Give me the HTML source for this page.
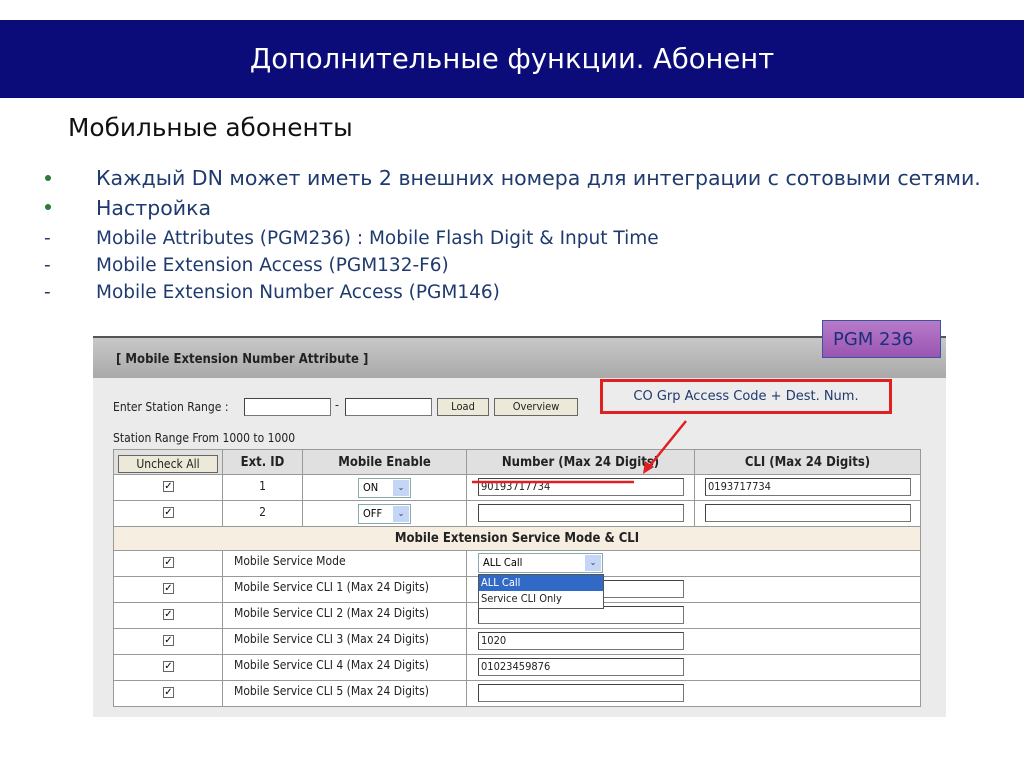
<!DOCTYPE html>
<html><head><meta charset="utf-8"><style>
*{margin:0;padding:0;box-sizing:border-box}
body{width:1024px;height:767px;background:#fff;position:relative;overflow:hidden;font-family:"DejaVu Sans","Liberation Sans",sans-serif}
.a{position:absolute}
.hdr{left:0;top:20px;width:1024px;height:78px;background:#0b0b7a;color:#fff;font-size:27.4px;text-align:center;line-height:80px}
.t{color:#1f3a6e;font-size:20.5px;white-space:nowrap}
.d{font-size:18.5px}
.s{font-size:12px;color:#222;font-family:"DejaVu Sans Condensed","Liberation Sans",sans-serif}
.cell{position:absolute;border-right:1px solid #999;border-bottom:1px solid #999;background:#fff}
.th{background:#e0e0e0;font-weight:bold;font-size:13px;text-align:center;line-height:25px;color:#222;font-family:"DejaVu Sans Condensed",sans-serif}
.inp{position:absolute;background:#fff;border:1px solid #777;border-top-color:#444;border-left-color:#444;height:18px;font-size:11px;line-height:16px;padding-left:2px;font-family:"DejaVu Sans Condensed",sans-serif;color:#222}
.cb{position:absolute;width:11px;height:11px;border:1px solid #666;background:#fff;font-size:10px;line-height:9px;text-align:center;color:#000}
.btn{position:absolute;background:#ece9d8;border:1px solid #666;font-size:11px;text-align:center;line-height:16px;height:18px;color:#222;font-family:"DejaVu Sans Condensed",sans-serif}
.sel{position:absolute;background:#fff;border:1px solid #8aa;height:20px;font-size:11px;line-height:18px;padding-left:4px;font-family:"DejaVu Sans Condensed",sans-serif}
.sel i{position:absolute;right:1px;top:1px;width:16px;height:16px;background:#c5d5f5;font-style:normal;font-size:9px;color:#335;text-align:center;line-height:16px}
.dot{position:absolute;width:6px;height:6px;border-radius:50%;background:#2a7a3a}
</style></head><body>
<div class="a hdr">Дополнительные функции. Абонент</div>
<div class="a" style="left:68px;top:113px;font-size:24.8px;color:#111">Мобильные абоненты</div>
<div class="dot" style="left:45px;top:175px"></div>
<div class="dot" style="left:45px;top:204px"></div>
<div class="a t" style="left:96px;top:166px">Каждый DN может иметь 2 внешних номера для интеграции с сотовыми сетями.</div>
<div class="a t" style="left:96px;top:196px">Настройка</div>
<div class="a t d" style="left:44px;top:228px">-</div>
<div class="a t d" style="left:44px;top:255px">-</div>
<div class="a t d" style="left:44px;top:282px">-</div>
<div class="a t d" style="left:96px;top:228px">Mobile Attributes (PGM236) : Mobile Flash Digit &amp; Input Time</div>
<div class="a t d" style="left:96px;top:255px">Mobile Extension Access (PGM132-F6)</div>
<div class="a t d" style="left:96px;top:282px">Mobile Extension Number Access (PGM146)</div>

<div class="a" style="left:93px;top:336px;width:853px;height:381px;background:#ebebeb"></div>
<div class="a" style="left:93px;top:336px;width:853px;height:42px;background:linear-gradient(#c8c8c8,#a9a9a9);border-top:2px solid #555"></div>
<div class="a s" style="left:116px;top:352px;font-weight:bold;font-size:13px">[ Mobile Extension Number Attribute ]</div>
<div class="a" style="left:822px;top:320px;width:119px;height:38px;background:linear-gradient(#b77bc8,#9a55b2);border:1px solid #3955a0;color:#1b2f7a;font-size:18px;padding:8px 0 0 10px">PGM 236</div>

<div class="a s" style="left:113px;top:400px">Enter Station Range :</div>
<div class="inp" style="left:244px;top:398px;width:87px"></div>
<div class="a s" style="left:335px;top:398px">-</div>
<div class="inp" style="left:345px;top:398px;width:87px"></div>
<div class="btn" style="left:437px;top:398px;width:52px">Load</div>
<div class="btn" style="left:494px;top:398px;width:84px">Overview</div>
<div class="a s" style="left:113px;top:431px">Station Range From 1000 to 1000</div>

<div class="a" style="left:600px;top:379px;width:292px;height:35px;border:3px solid #e02020;background:#ececec;color:#1f3a6e;font-size:13px;text-align:center;line-height:29px">CO Grp Access Code + Dest. Num.</div>

<div class="a" style="left:113px;top:449px;width:808px;height:258px;border-left:1px solid #999;border-top:1px solid #999;background:#fff"></div>
<div class="cell th" style="left:114px;top:450px;width:109px;height:25px"></div>
<div class="btn" style="left:118px;top:455px;width:100px;height:18px;font-size:12px">Uncheck All</div>
<div class="cell th" style="left:223px;top:450px;width:80px;height:25px">Ext. ID</div>
<div class="cell th" style="left:303px;top:450px;width:164px;height:25px">Mobile Enable</div>
<div class="cell th" style="left:467px;top:450px;width:228px;height:25px">Number (Max 24 Digits)</div>
<div class="cell th" style="left:695px;top:450px;width:226px;height:25px">CLI (Max 24 Digits)</div>
<div class="cell" style="left:114px;top:475px;width:109px;height:26px"></div>
<div class="cell s" style="left:223px;top:475px;width:80px;height:26px;text-align:center;padding-top:4px">1</div>
<div class="cell" style="left:303px;top:475px;width:164px;height:26px"></div>
<div class="cell" style="left:467px;top:475px;width:228px;height:26px"></div>
<div class="cell" style="left:695px;top:475px;width:226px;height:26px"></div>
<div class="cell" style="left:114px;top:501px;width:109px;height:26px"></div>
<div class="cell s" style="left:223px;top:501px;width:80px;height:26px;text-align:center;padding-top:4px">2</div>
<div class="cell" style="left:303px;top:501px;width:164px;height:26px"></div>
<div class="cell" style="left:467px;top:501px;width:228px;height:26px"></div>
<div class="cell" style="left:695px;top:501px;width:226px;height:26px"></div>
<div class="cb" style="left:163px;top:481px">✓</div>
<div class="cb" style="left:163px;top:507px">✓</div>
<div class="sel" style="left:358px;top:478px;width:53px">ON<i>⌄</i></div>
<div class="sel" style="left:358px;top:504px;width:53px">OFF<i>⌄</i></div>
<div class="inp" style="left:478px;top:478px;width:206px">90193717734</div>
<div class="inp" style="left:705px;top:478px;width:206px">0193717734</div>
<div class="inp" style="left:478px;top:504px;width:206px"></div>
<div class="inp" style="left:705px;top:504px;width:206px"></div>
<div class="cell th" style="left:114px;top:527px;width:807px;height:24px;background:#f7eee2;line-height:24px">Mobile Extension Service Mode &amp; CLI</div>
<div class="cell" style="left:114px;top:551px;width:109px;height:26px"></div><div class="cell s" style="left:223px;top:551px;width:244px;height:26px;padding:3px 0 0 11px">Mobile Service Mode</div><div class="cell" style="left:467px;top:551px;width:454px;height:26px"></div>
<div class="cell" style="left:114px;top:577px;width:109px;height:26px"></div><div class="cell s" style="left:223px;top:577px;width:244px;height:26px;padding:3px 0 0 11px">Mobile Service CLI 1 (Max 24 Digits)</div><div class="cell" style="left:467px;top:577px;width:454px;height:26px"></div>
<div class="cell" style="left:114px;top:603px;width:109px;height:26px"></div><div class="cell s" style="left:223px;top:603px;width:244px;height:26px;padding:3px 0 0 11px">Mobile Service CLI 2 (Max 24 Digits)</div><div class="cell" style="left:467px;top:603px;width:454px;height:26px"></div>
<div class="cell" style="left:114px;top:629px;width:109px;height:26px"></div><div class="cell s" style="left:223px;top:629px;width:244px;height:26px;padding:3px 0 0 11px">Mobile Service CLI 3 (Max 24 Digits)</div><div class="cell" style="left:467px;top:629px;width:454px;height:26px"></div>
<div class="cell" style="left:114px;top:655px;width:109px;height:26px"></div><div class="cell s" style="left:223px;top:655px;width:244px;height:26px;padding:3px 0 0 11px">Mobile Service CLI 4 (Max 24 Digits)</div><div class="cell" style="left:467px;top:655px;width:454px;height:26px"></div>
<div class="cell" style="left:114px;top:681px;width:109px;height:26px"></div><div class="cell s" style="left:223px;top:681px;width:244px;height:26px;padding:3px 0 0 11px">Mobile Service CLI 5 (Max 24 Digits)</div><div class="cell" style="left:467px;top:681px;width:454px;height:26px"></div>
<div class="cb" style="left:163px;top:557px">✓</div>
<div class="cb" style="left:163px;top:583px">✓</div>
<div class="cb" style="left:163px;top:609px">✓</div>
<div class="cb" style="left:163px;top:635px">✓</div>
<div class="cb" style="left:163px;top:661px">✓</div>
<div class="cb" style="left:163px;top:687px">✓</div>
<div class="sel" style="left:478px;top:553px;width:125px">ALL Call<i>⌄</i></div>
<div class="inp" style="left:478px;top:580px;width:206px"></div>
<div class="inp" style="left:478px;top:606px;width:206px"></div>
<div class="inp" style="left:478px;top:632px;width:206px">1020</div>
<div class="inp" style="left:478px;top:658px;width:206px">01023459876</div>
<div class="inp" style="left:478px;top:684px;width:206px"></div>
<div class="a" style="left:478px;top:574px;width:126px;height:35px;background:#fff;border:1px solid #555;font-size:11px;font-family:'DejaVu Sans Condensed',sans-serif">
<div style="background:#3169c6;color:#fff;height:16px;line-height:16px;padding-left:2px">ALL Call</div>
<div style="padding-left:2px;line-height:16px;color:#222">Service CLI Only</div></div>

<svg class="a" style="left:0;top:0" width="1024" height="767">
<line x1="472" y1="482" x2="634" y2="482" stroke="#e02020" stroke-width="2.5"/>
<line x1="686" y1="421" x2="648" y2="468" stroke="#e02020" stroke-width="2.5"/>
<polygon points="643,474 645,461 654,467" fill="#e02020"/>
</svg>
</body></html>
